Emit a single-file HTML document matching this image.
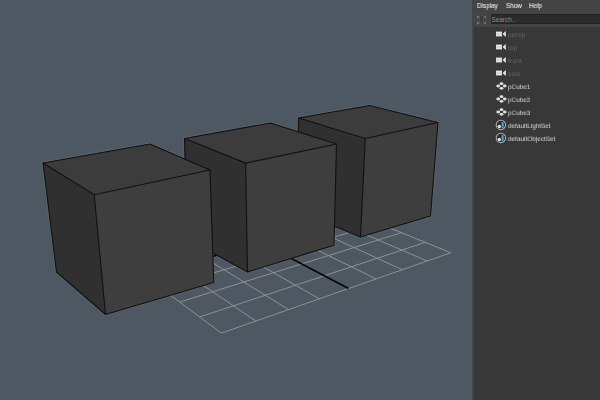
<!DOCTYPE html>
<html><head><meta charset="utf-8"><style>
html,body{margin:0;padding:0;width:600px;height:400px;overflow:hidden;background:#4e5862}
body{position:relative;font-family:"Liberation Sans",sans-serif}
.panel{position:absolute;left:472px;top:0;width:128px;height:400px;background:#444444}
.list{position:absolute;left:474px;top:27.3px;width:126px;height:373px;background:#383838}
.menu{position:absolute;top:1px;font-size:7.2px;color:#dadada;line-height:9px;-webkit-text-stroke:0.2px currentColor;transform:scaleX(0.88);transform-origin:0 0;will-change:transform}
.search{position:absolute;left:490.5px;top:13.5px;width:110px;height:8.5px;background:#2b2b2b;border-top:1px solid #232323;border-bottom:1px solid #232323;border-left:1px solid #262626}
.stext{position:absolute;left:491.5px;top:15px;font-size:6.4px;color:#8a8a8a;line-height:9px}
.it{position:absolute;left:508px;font-size:6.4px;line-height:10px;white-space:nowrap;-webkit-text-stroke:0.05px currentColor;transform:scaleY(0.88);transform-origin:0 70%;will-change:transform}
</style></head><body>
<svg width="472" height="400" viewBox="0 0 472 400" style="position:absolute;left:0;top:0">
<rect width="472" height="400" fill="#4e5862"/>
<polygon fill="none" stroke="#5a646e" stroke-width="2.8" stroke-linejoin="round" points="298.5,118 369.5,105.5 438,122.5 430.5,216 360.5,237 297,211"/><polygon fill="none" stroke="#5a646e" stroke-width="2.8" stroke-linejoin="round" points="184.5,138.5 270.5,123 336.5,144 334,245.3 247.5,272 187,239"/><polygon fill="none" stroke="#5a646e" stroke-width="2.8" stroke-linejoin="round" points="43,163 150,144 210,170 213.8,282.5 105.5,314.5 56.5,272"/>
<g stroke="#929394" stroke-width="0.95" fill="none" transform="translate(0.3,0.1)"><line x1="221.00" y1="333.06" x2="87.15" y2="233.25"/><line x1="221.00" y1="333.06" x2="450.46" y2="252.63"/><line x1="255.61" y1="320.93" x2="115.82" y2="226.42"/><line x1="199.29" y1="316.87" x2="424.94" y2="242.27"/><line x1="288.23" y1="309.49" x2="143.26" y2="219.88"/><line x1="179.35" y1="302.00" x2="401.13" y2="232.60"/><line x1="319.03" y1="298.70" x2="169.55" y2="213.62"/><line x1="160.98" y1="288.30" x2="378.84" y2="223.56"/><line x1="375.77" y1="278.81" x2="218.95" y2="201.85"/><line x1="128.23" y1="263.88" x2="338.33" y2="207.11"/><line x1="401.94" y1="269.63" x2="242.18" y2="196.31"/><line x1="113.57" y1="252.95" x2="319.86" y2="199.62"/><line x1="426.81" y1="260.92" x2="264.52" y2="190.99"/><line x1="99.91" y1="242.77" x2="302.45" y2="192.55"/><line x1="450.46" y1="252.63" x2="286.00" y2="185.87"/><line x1="87.15" y1="233.25" x2="286.00" y2="185.87"/></g>
<g stroke="#050505" stroke-width="1.6" fill="none" transform="translate(0.3,0.1)"><line x1="348.17" y1="288.48" x2="194.76" y2="207.61"/><line x1="143.99" y1="275.63" x2="357.96" y2="215.08"/></g>
<polygon fill="#3c3c3c" points="298.5,118 369.5,105.5 438,122.5 365.3,138.5"/><polygon fill="#303030" points="298.5,118 365.3,138.5 360.5,237 297,211"/><polygon fill="#3e3e3e" points="365.3,138.5 438,122.5 430.5,216 360.5,237"/><polygon fill="none" stroke="#101010" stroke-width="1.1" stroke-linejoin="round" points="298.5,118 369.5,105.5 438,122.5 430.5,216 360.5,237 297,211"/><polyline fill="none" stroke="#101010" stroke-width="1.1" points="298.5,118 365.3,138.5 438,122.5"/><line stroke="#101010" stroke-width="1.1" x1="365.3" y1="138.5" x2="360.5" y2="237"/><polygon fill="#3c3c3c" points="184.5,138.5 270.5,123 336.5,144 245.6,163.1"/><polygon fill="#303030" points="184.5,138.5 245.6,163.1 247.5,272 187,239"/><polygon fill="#3e3e3e" points="245.6,163.1 336.5,144 334,245.3 247.5,272"/><polygon fill="none" stroke="#101010" stroke-width="1.1" stroke-linejoin="round" points="184.5,138.5 270.5,123 336.5,144 334,245.3 247.5,272 187,239"/><polyline fill="none" stroke="#101010" stroke-width="1.1" points="184.5,138.5 245.6,163.1 336.5,144"/><line stroke="#101010" stroke-width="1.1" x1="245.6" y1="163.1" x2="247.5" y2="272"/><polygon fill="#3c3c3c" points="43,163 150,144 210,170 94.2,194.7"/><polygon fill="#303030" points="43,163 94.2,194.7 105.5,314.5 56.5,272"/><polygon fill="#3e3e3e" points="94.2,194.7 210,170 213.8,282.5 105.5,314.5"/><polygon fill="none" stroke="#101010" stroke-width="1.1" stroke-linejoin="round" points="43,163 150,144 210,170 213.8,282.5 105.5,314.5 56.5,272"/><polyline fill="none" stroke="#101010" stroke-width="1.1" points="43,163 94.2,194.7 210,170"/><line stroke="#101010" stroke-width="1.1" x1="94.2" y1="194.7" x2="105.5" y2="314.5"/>
</svg>
<div class="panel"></div>
<div class="list"></div><div style="position:absolute;left:474px;top:27px;width:2px;height:373px;background:#343437"></div><div style="position:absolute;left:472px;top:27px;width:2px;height:373px;background:#45443f"></div>
<div class="menu" style="left:477.3px">Display</div>
<div class="menu" style="left:506px">Show</div>
<div class="menu" style="left:529.3px">Help</div>
<svg width="12" height="12" viewBox="0 0 12 12" style="position:absolute;left:476px;top:14px"><rect x="3.4" y="1.6" width="4.2" height="8.2" rx="1" fill="#3c3c3c" stroke="#575757" stroke-width="0.6"/><g fill="#7c7c7c"><polygon points="1,1.2 3.6,2.8 1,4.5"/><polygon points="10,1.5 7.5,2.9 10,4.3"/><polygon points="1,7.5 3.5,9 1,10.7"/><polygon points="10,7.7 7.5,9.1 10,10.4"/></g></svg>
<div class="search"></div>
<div class="stext">Search...</div>
<svg width="11" height="7" viewBox="0 0 11 7" style="position:absolute;left:496px;top:30.5px"><rect x="0" y="0.6" width="6" height="4.8" fill="#e6e6e6"/><rect x="0" y="2.4" width="6" height="0.35" fill="#b8b8b8"/><rect x="0" y="3.7" width="6" height="0.35" fill="#b8b8b8"/><polygon points="7,2.6 9.8,0 9.8,6 7,3.4" fill="#e6e6e6"/></svg><div class="it" style="top:29.5px;color:#666666;letter-spacing:0.25px">persp</div><svg width="11" height="7" viewBox="0 0 11 7" style="position:absolute;left:496px;top:43.5px"><rect x="0" y="0.6" width="6" height="4.8" fill="#e6e6e6"/><rect x="0" y="2.4" width="6" height="0.35" fill="#b8b8b8"/><rect x="0" y="3.7" width="6" height="0.35" fill="#b8b8b8"/><polygon points="7,2.6 9.8,0 9.8,6 7,3.4" fill="#e6e6e6"/></svg><div class="it" style="top:42.5px;color:#666666;letter-spacing:0.25px">top</div><svg width="11" height="7" viewBox="0 0 11 7" style="position:absolute;left:496px;top:56.5px"><rect x="0" y="0.6" width="6" height="4.8" fill="#e6e6e6"/><rect x="0" y="2.4" width="6" height="0.35" fill="#b8b8b8"/><rect x="0" y="3.7" width="6" height="0.35" fill="#b8b8b8"/><polygon points="7,2.6 9.8,0 9.8,6 7,3.4" fill="#e6e6e6"/></svg><div class="it" style="top:55.5px;color:#666666;letter-spacing:0.25px">front</div><svg width="11" height="7" viewBox="0 0 11 7" style="position:absolute;left:496px;top:69.5px"><rect x="0" y="0.6" width="6" height="4.8" fill="#e6e6e6"/><rect x="0" y="2.4" width="6" height="0.35" fill="#b8b8b8"/><rect x="0" y="3.7" width="6" height="0.35" fill="#b8b8b8"/><polygon points="7,2.6 9.8,0 9.8,6 7,3.4" fill="#e6e6e6"/></svg><div class="it" style="top:68.5px;color:#666666;letter-spacing:0.25px">side</div><svg width="12" height="10" viewBox="0 0 12 10" style="position:absolute;left:495.5px;top:81px"><g fill="#e2e2e2"><ellipse cx="2.2" cy="5" rx="1.9" ry="1.4"/><ellipse cx="8.7" cy="5" rx="1.9" ry="1.4"/><ellipse cx="5.5" cy="2.7" rx="1.9" ry="1.4"/><ellipse cx="5.5" cy="7.3" rx="1.9" ry="1.4"/></g></svg><div class="it" style="top:81.5px;color:#cdcdcd">pCube1</div><svg width="12" height="10" viewBox="0 0 12 10" style="position:absolute;left:495.5px;top:94px"><g fill="#e2e2e2"><ellipse cx="2.2" cy="5" rx="1.9" ry="1.4"/><ellipse cx="8.7" cy="5" rx="1.9" ry="1.4"/><ellipse cx="5.5" cy="2.7" rx="1.9" ry="1.4"/><ellipse cx="5.5" cy="7.3" rx="1.9" ry="1.4"/></g></svg><div class="it" style="top:94.5px;color:#cdcdcd">pCube2</div><svg width="12" height="10" viewBox="0 0 12 10" style="position:absolute;left:495.5px;top:107px"><g fill="#e2e2e2"><ellipse cx="2.2" cy="5" rx="1.9" ry="1.4"/><ellipse cx="8.7" cy="5" rx="1.9" ry="1.4"/><ellipse cx="5.5" cy="2.7" rx="1.9" ry="1.4"/><ellipse cx="5.5" cy="7.3" rx="1.9" ry="1.4"/></g></svg><div class="it" style="top:107.5px;color:#cdcdcd">pCube3</div><svg width="12" height="12" viewBox="0 0 12 12" style="position:absolute;left:495px;top:119.1px"><circle cx="5.9" cy="5.9" r="4.7" fill="#2a2a2a" stroke="#ababab" stroke-width="1.1"/><path d="M6.5 3 H8.4 Q9.3 6 8.4 9 H6.5 Z" fill="#3aaac2"/><circle cx="4.3" cy="7.5" r="2.1" fill="#222"/><circle cx="4.3" cy="7.5" r="1.7" fill="#e4e4e4"/></svg><div class="it" style="top:120.5px;color:#cdcdcd">defaultLightSet</div><svg width="12" height="12" viewBox="0 0 12 12" style="position:absolute;left:495px;top:132.1px"><circle cx="5.9" cy="5.9" r="4.7" fill="#2a2a2a" stroke="#ababab" stroke-width="1.1"/><path d="M6.5 3 H8.4 Q9.3 6 8.4 9 H6.5 Z" fill="#3aaac2"/><circle cx="4.3" cy="7.5" r="2.1" fill="#222"/><circle cx="4.3" cy="7.5" r="1.7" fill="#e4e4e4"/></svg><div class="it" style="top:133.5px;color:#cdcdcd">defaultObjectSet</div>
</body></html>
